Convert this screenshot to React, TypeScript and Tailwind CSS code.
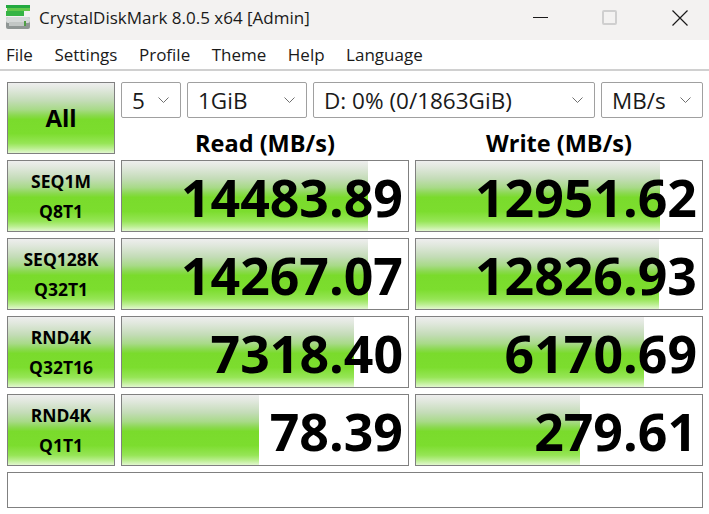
import React from 'react';

const sans = '"Open Sans", "Noto Sans", sans-serif';

type Row = { label: string; sub: string; read: string; readBar: number; write: string; writeBar: number };

const rows: Row[] = [
  { label: 'SEQ1M', sub: 'Q8T1', read: '14483.89', readBar: 246, write: '12951.62', writeBar: 244 },
  { label: 'SEQ128K', sub: 'Q32T1', read: '14267.07', readBar: 246, write: '12826.93', writeBar: 243 },
  { label: 'RND4K', sub: 'Q32T16', read: '7318.40', readBar: 232, write: '6170.69', writeBar: 228 },
  { label: 'RND4K', sub: 'Q1T1', read: '78.39', readBar: 137, write: '279.61', writeBar: 164 },
];

const glass =
  'bg-[linear-gradient(to_bottom,#eeeeee_0%,#dfe7db_10%,#c4dcb8_25%,#a8da88_38%,#8bd951_46%,#7adb2c_52%,#7cdd2e_72%,#96e556_86%,#b8ee8c_93%,#e2f7cf_100%)]';

function Combo({ text, className }: { text: string; className: string }) {
  return (
    <div className={`h-9 flex items-center justify-between pl-2.5 pr-[11px] bg-white border border-[#a0a0a0] rounded-[2px] text-[22.5px] text-[#1a1a1a] ${className}`}>
      <span className="pt-0.5">{text}</span>
      <svg width="11" height="7" viewBox="0 0 11 7" fill="none" stroke="#6f6f6f" strokeWidth="1">
        <path d="M0.5 0.5 L5.5 5.5 L10.5 0.5" />
      </svg>
    </div>
  );
}

function Score({ value, bar }: { value: string; bar: number }) {
  return (
    <div
      className={`h-[72px] flex items-center justify-end pr-[5px] pt-1 border border-[#808080] bg-white bg-no-repeat ${glass}`}
      style={{ backgroundSize: `${bar}px 100%` }}
    >
      <span className="text-[51.8px] font-bold leading-none text-black">{value}</span>
    </div>
  );
}

export default function App() {
  return (
    <div className="w-[709px] h-[514px] bg-white overflow-hidden" style={{ fontFamily: sans }}>
      <div className="h-10 bg-[#f3f2f1] flex items-center pb-[5px]">
        <svg className="ml-1.5 shrink-0" width="25" height="25" viewBox="0 0 25 25">
          <rect x="0" y="12" width="24" height="12" rx="2" fill="#8f9694" />
          <rect x="0" y="12" width="24" height="6" rx="2" fill="#d5d9d8" />
          <rect x="3" y="17" width="15" height="4" fill="#c2c7c5" />
          <rect x="18" y="16" width="2" height="5" fill="#4f9e45" />
          <rect x="0" y="0" width="24" height="3" fill="#22a83f" />
          <rect x="1" y="3" width="23" height="3" fill="#63c74a" />
          <rect x="0" y="6" width="18" height="5" fill="#35b444" />
        </svg>
        <span className="ml-2 text-[17px] text-[#1a1a1a]">CrystalDiskMark 8.0.5 x64 [Admin]</span>
        <div className="ml-auto flex items-center">
          <div className="w-[15px] h-px bg-[#1a1a1a]" />
          <div className="ml-[54px] w-[15px] h-[15px] rounded-[2px] border-2 border-[#cfcfcf]" />
          <svg className="ml-[55px] mr-[21px]" width="16" height="16" viewBox="0 0 16 16" stroke="#1a1a1a" strokeWidth="1.2">
            <path d="M0.5 0.5 L15.5 15.5 M15.5 0.5 L0.5 15.5" />
          </svg>
        </div>
      </div>

      <div className="h-[31px] bg-white flex items-center gap-[21.5px] pl-[6px] text-[17px] text-[#1a1a1a] border-b-2 border-b-[#d0d0d0]">
        <span>File</span>
        <span>Settings</span>
        <span>Profile</span>
        <span>Theme</span>
        <span>Help</span>
        <span>Language</span>
      </div>

      <div className="pl-[7px] pr-[6px] pt-[11px]">
        <div className="grid grid-cols-[108px_288px_288px] gap-x-1.5">
          <div className={`h-[72px] flex items-center justify-center border border-[#808080] text-[24px] font-bold text-black ${glass}`}>All</div>
          <div className="col-span-2 flex flex-col">
            <div className="flex gap-1.5">
              <Combo text="5" className="w-[60px]" />
              <Combo text="1GiB" className="w-[120px]" />
              <Combo text="D: 0% (0/1863GiB)" className="w-[282px]" />
              <Combo text="MB/s" className="w-[102px]" />
            </div>
            <div className="grid grid-cols-2 gap-x-1.5 h-9 pt-[14px] items-center text-center text-[23.5px] font-bold text-black leading-none">
              <span>Read (MB/s)</span>
              <span>Write (MB/s)</span>
            </div>
          </div>
        </div>

        <div className="mt-1.5 grid grid-cols-[108px_288px_288px] gap-1.5">
          {rows.map((r, i) => (
            <React.Fragment key={i}>
              <div className={`h-[72px] flex flex-col items-center justify-center gap-[6px] border border-[#808080] text-[17.5px] font-bold leading-6 text-black ${glass}`}>
                <span>{r.label}</span>
                <span>{r.sub}</span>
              </div>
              <Score value={r.read} bar={r.readBar} />
              <Score value={r.write} bar={r.writeBar} />
            </React.Fragment>
          ))}
        </div>

        <div className="mt-1.5 h-9 border border-[#808080] bg-white" />
      </div>
    </div>
  );
}
